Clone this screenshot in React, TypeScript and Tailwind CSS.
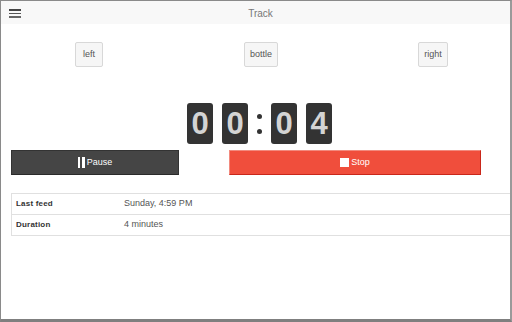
import React from "react";

function Digit({ d }: { d: string }) {
  return (
    <div className="w-[26px] h-[41px] rounded-[3px] bg-[#333333] flex items-center justify-center text-[31px] font-bold leading-none text-[#d4d4d4]">
      {d}
    </div>
  );
}

export default function App() {
  return (
    <div
      className="w-[512px] h-[322px] overflow-hidden bg-white border-t border-l border-r-2 border-b-[3px] border-t-[#8a8a8a] border-l-[#8a8a8a] border-r-[#9a9a9a] border-b-[#7f7f7f] flex flex-col"
      style={{ fontFamily: '"Liberation Sans", Arial, sans-serif' }}
    >
      {/* Header */}
      <div className="h-[23px] bg-[#f8f8f8] relative flex items-center justify-center shrink-0">
        <div className="absolute left-[8px] top-[8px] flex flex-col gap-[2px]">
          <div className="w-[12px] h-[1.5px] bg-[#444]" />
          <div className="w-[12px] h-[1.5px] bg-[#555]" />
          <div className="w-[12px] h-[1.5px] bg-[#666]" />
        </div>
        <span className="text-[10px] text-[#777] pl-[10px] pt-[1px]">Track</span>
      </div>

      {/* Side buttons */}
      <div className="flex mt-[18px] pl-[2px] shrink-0">
        <div className="w-[172px] shrink-0 flex justify-center">
          <div className="w-[28px] h-[25px] bg-[#f6f6f6] border border-[#d8d8d8] rounded-[2px] flex items-center justify-center text-[9px] text-[#555]">left</div>
        </div>
        <div className="w-[172px] shrink-0 flex justify-center">
          <div className="w-[34px] h-[25px] bg-[#f6f6f6] border border-[#d8d8d8] rounded-[2px] flex items-center justify-center text-[9px] text-[#555]">bottle</div>
        </div>
        <div className="w-[172px] shrink-0 flex justify-center">
          <div className="w-[30px] h-[25px] bg-[#f6f6f6] border border-[#d8d8d8] rounded-[2px] flex items-center justify-center text-[9px] text-[#555]">right</div>
        </div>
      </div>

      {/* Timer */}
      <div className="flex items-center mt-[36px] pl-[186px] shrink-0">
        <Digit d="0" />
        <div className="w-[9px]" />
        <Digit d="0" />
        <div className="w-[23px] flex flex-col items-center gap-[10px]">
          <div className="w-[5px] h-[5px] rounded-full bg-[#333]" />
          <div className="w-[5px] h-[5px] rounded-full bg-[#333]" />
        </div>
        <Digit d="0" />
        <div className="w-[9px]" />
        <Digit d="4" />
      </div>

      {/* Action buttons */}
      <div className="flex mt-[6px] pl-[10px] shrink-0">
        <div className="w-[168px] h-[25px] bg-[#454545] border border-[#333] border-b-[#2a2a2a] flex items-center justify-center gap-[2px] text-white text-[9px]">
          <span className="flex gap-[2px]">
            <span className="w-[2.5px] h-[11px] bg-white" />
            <span className="w-[2.5px] h-[11px] bg-white" />
          </span>
          <span>Pause</span>
        </div>
        <div className="ml-[50px] w-[252px] h-[25px] bg-[#f04e3c] border border-[#f28a7e] border-r-[#c9271a] border-b-[#c9271a] flex items-center justify-center gap-[2px] text-white text-[9px]">
          <span className="w-[9px] h-[9px] bg-white" />
          <span>Stop</span>
        </div>
      </div>

      {/* Table */}
      <div className="mt-[18px] ml-[10px] w-[520px] border border-[#e0e0e0] shrink-0">
        <div className="h-[21px] flex items-center border-b border-[#e0e0e0]">
          <div className="w-[112px] pl-[4px] text-[8px] font-bold text-[#333] tracking-[0.2px]">Last feed</div>
          <div className="text-[9px] text-[#555]">Sunday, 4:59 PM</div>
        </div>
        <div className="h-[20px] flex items-center">
          <div className="w-[112px] pl-[4px] text-[8px] font-bold text-[#333] tracking-[0.2px]">Duration</div>
          <div className="text-[9px] text-[#555]">4 minutes</div>
        </div>
      </div>
    </div>
  );
}
